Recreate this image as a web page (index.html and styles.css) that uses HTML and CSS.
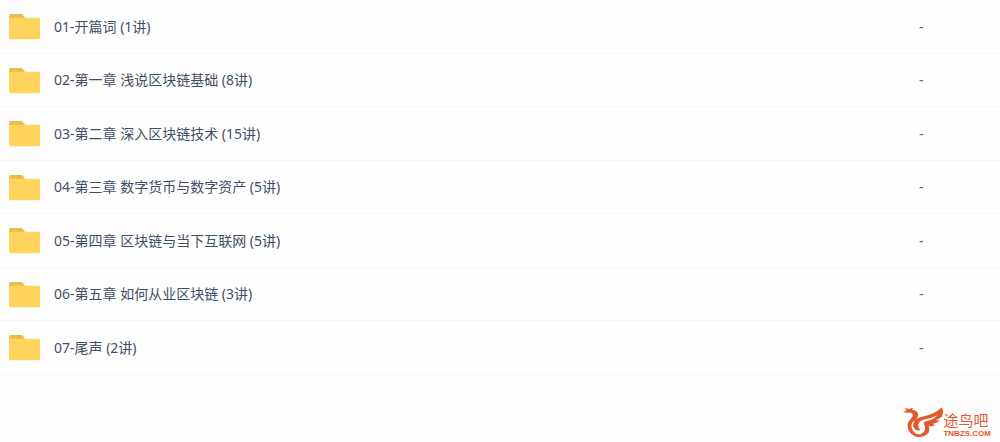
FILE: index.html
```html
<!DOCTYPE html>
<html lang="zh-CN">
<head>
<meta charset="utf-8">
<meta name="viewport" content="width=device-width, initial-scale=1">
<title>区块链课程</title>
<link rel="stylesheet" href="styles.css">
</head>
<body>
<svg class="defs" aria-hidden="true">
  <symbol id="folder" viewBox="0 0 32 27">
    <path d="M0 2.800Q0 1 1.800 1h10.400q1 0 1.700.8L16 5v5H0z" fill="#e9bd4e"/>
    <path d="M0 5.600Q0 4.800 1 4.800h28.600q1.400 0 1.400 1.400v18.400q0 1.600-1.600 1.600H1.600Q0 26.200 0 24.600z" fill="#ffd45c"/>
  </symbol>
</svg>
<main class="page">
  <table class="files">
    <tbody>
      <tr class="row"><td class="name"><a class="link" href="#"><svg class="icon" aria-hidden="true"><use href="#folder"/></svg><span>01-开篇词 (1讲)</span></a></td><td class="size">-</td></tr>
      <tr class="row"><td class="name"><a class="link" href="#"><svg class="icon" aria-hidden="true"><use href="#folder"/></svg><span>02-第一章 浅说区块链基础 (8讲)</span></a></td><td class="size">-</td></tr>
      <tr class="row"><td class="name"><a class="link" href="#"><svg class="icon" aria-hidden="true"><use href="#folder"/></svg><span>03-第二章 深入区块链技术 (15讲)</span></a></td><td class="size">-</td></tr>
      <tr class="row"><td class="name"><a class="link" href="#"><svg class="icon" aria-hidden="true"><use href="#folder"/></svg><span>04-第三章 数字货币与数字资产 (5讲)</span></a></td><td class="size">-</td></tr>
      <tr class="row"><td class="name"><a class="link" href="#"><svg class="icon" aria-hidden="true"><use href="#folder"/></svg><span>05-第四章 区块链与当下互联网 (5讲)</span></a></td><td class="size">-</td></tr>
      <tr class="row"><td class="name"><a class="link" href="#"><svg class="icon" aria-hidden="true"><use href="#folder"/></svg><span>06-第五章 如何从业区块链 (3讲)</span></a></td><td class="size">-</td></tr>
      <tr class="row"><td class="name"><a class="link" href="#"><svg class="icon" aria-hidden="true"><use href="#folder"/></svg><span>07-尾声 (2讲)</span></a></td><td class="size">-</td></tr>
    </tbody>
  </table>
  <footer class="brand">
    <svg class="bird" viewBox="0 0 120 96" aria-hidden="true">
      <g fill="#e5582b">
        <path d="M0 19Q5 14 12 14Q7 11 5 7Q13 7 20 10Q22 5 31 5Q29 9 27 11Q42 12 45 24Q47 34 37 42Q26 49 25 59Q26 75 43 86Q56 91 63 86Q48 98 33 89Q16 80 14 62Q12 49 23 39Q32 32 29 25Q26 18 15 20Q7 18 0 19Z"/>
        <path d="M30 58Q31 39 55 33Q94 26 117 4Q124 22 115 34Q108 40 98 42Q105 44 110 43Q105 52 89 53Q92 57 97 57Q88 63 77 60Q85 83 62 91Q43 95 32 84Q51 89 62 78Q70 68 63 56Q60 49 70 46Q91 41 104 28Q83 38 60 41Q48 44 46 56Q45 65 52 73Q31 76 30 58Z"/>
      </g>
    </svg>
    <div class="wordmark"><span class="title">途鸟吧</span><span class="site">TNBZS.COM</span></div>
  </footer>
</main>
</body>
</html>
```
FILE: styles.css
```css
* {
  box-sizing: border-box;
}

body {
  margin: 0;
  background: #fefefe;
  color: #424e67;
  font: 14px/20px "Noto Sans", "Noto Sans CJK SC", sans-serif;
}

.defs {
  position: absolute;
  width: 0;
  height: 0;
}

.page {
  display: flex;
  flex-direction: column;
  min-height: 100vh;
}

.files {
  width: 100%;
  border-collapse: separate;
  border-spacing: 0;
}

.row {
  height: 53px;
}

.row:nth-child(odd) {
  height: 54px;
}

.name,
.size {
  padding: 0;
  border-bottom: 1px solid #f5f6f8;
}

.name {
  padding-left: 9px;
}

.size {
  width: 81px;
  color: #666;
}

.link {
  display: flex;
  align-items: center;
  gap: 13px;
  color: inherit;
  text-decoration: none;
}

.icon {
  flex: none;
  width: 32px;
  height: 27px;
}

.brand {
  display: flex;
  align-items: flex-end;
  justify-content: flex-end;
  margin-top: auto;
  padding: 0 9px 4px 0;
  color: #e5582b;
}

.bird {
  width: 40px;
  height: 32px;
}

.wordmark {
  display: flex;
  flex-direction: column;
  gap: 3px;
}

.title {
  font: 15px/15px "Noto Sans CJK SC", sans-serif;
}

.site {
  font: bold 8px/8px "Liberation Sans", sans-serif;
}
```
